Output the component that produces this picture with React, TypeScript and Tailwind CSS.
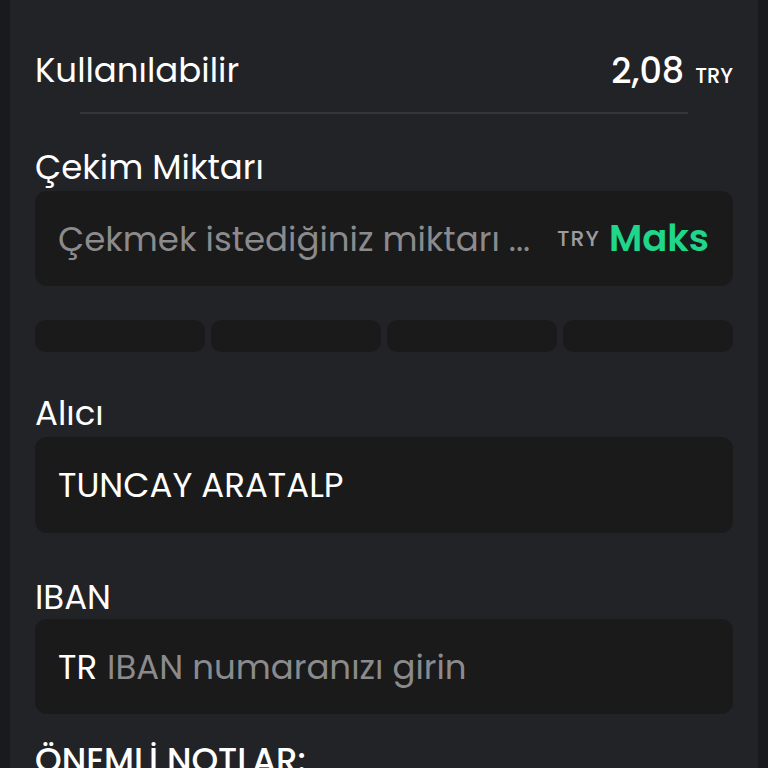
const FONT = "font-['Poppins','Inter','Noto_Sans',sans-serif]";

const PILLS = ["p1", "p2", "p3", "p4"];

function Label({ children, className = "" }: { children: React.ReactNode; className?: string }) {
  return (
    <div className={`flex h-10 items-center text-[34px] leading-none text-white ${className}`}>{children}</div>
  );
}

export default function App() {
  return (
    <div className={`h-screen overflow-hidden bg-[#1a1a1c] px-[10px] ${FONT}`}>
      <div className="h-full bg-[#222327] px-[25px] pt-[50px]">
        <div className="flex h-10 items-center justify-between text-white">
          <span className="text-[34px] leading-none">Kullanılabilir</span>
          <span className="flex items-baseline gap-[11px]">
            <span className="text-[35px] font-medium leading-none">2,08</span>
            <span className="text-[21px] font-medium leading-none">TRY</span>
          </span>
        </div>

        <div className="mx-[45px] mt-[22px] h-[2px] bg-[#35363b]" />

        <Label className="mt-[33px]">Çekim Miktarı</Label>
        <div className="mt-[4px] flex h-[95px] items-center rounded-xl bg-[#1a1a1b] pl-[23px] pr-[24px]">
          <span className="min-w-0 flex-1 whitespace-nowrap text-[34px] leading-none text-[#8b8b8d]">
            Çekmek istediğiniz miktarı ...
          </span>
          <span className="ml-[12px] text-[22px] font-medium leading-none tracking-[0.05em] text-[#9c9c9e]">
            TRY
          </span>
          <span className="ml-[9px] text-[37px] font-semibold leading-none text-[#1fd68b]">Maks</span>
        </div>

        <div className="mt-[34px] grid grid-cols-4 gap-[6px]">
          {PILLS.map((p) => (
            <div key={p} className="h-[32px] rounded-[10px] bg-[#1a1a1b]" />
          ))}
        </div>

        <Label className="mt-[41px]">Alıcı</Label>
        <div className="mt-[4px] flex h-[96px] items-center rounded-xl bg-[#1a1a1b] px-[23px]">
          <span className="text-[34px] leading-none text-white">TUNCAY ARATALP</span>
        </div>

        <Label className="mt-[44px]">IBAN</Label>
        <div className="mt-[2px] flex h-[95px] items-center rounded-xl bg-[#1a1a1b] px-[23px]">
          <span className="text-[34px] leading-none text-white">TR</span>
          <span className="ml-[10px] text-[34px] leading-none text-[#8b8b8d]">IBAN numaranızı girin</span>
        </div>

        <Label className="mt-[26px] font-medium">ÖNEMLİ NOTLAR:</Label>
      </div>
    </div>
  );
}
